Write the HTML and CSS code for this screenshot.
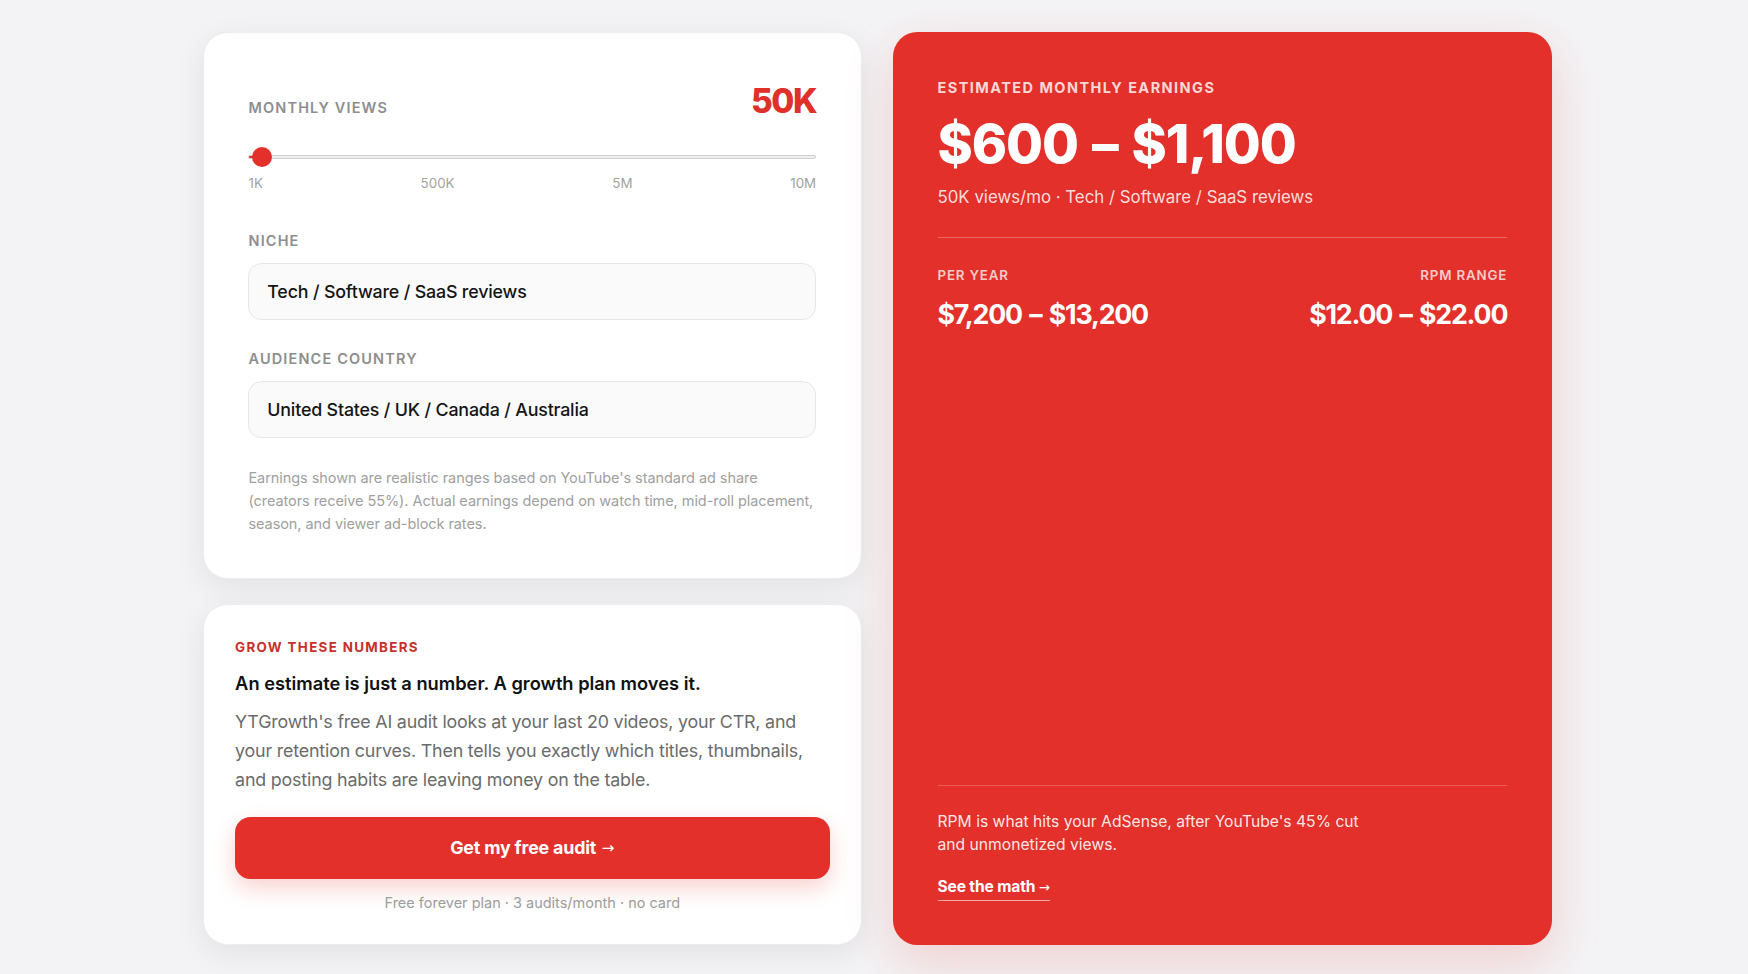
FILE: index.html
```html
<!DOCTYPE html>
<html lang="en">
<head>
<meta charset="utf-8">
<title>YouTube Earnings Estimator</title>
<link rel="stylesheet" href="styles.css">
</head>
<body>
<main class="layout">
  <div class="left-col">
    <section class="card calc-card">
      <div class="views-head">
        <span class="label">Monthly views</span>
        <span class="views-value">50K</span>
      </div>
      <div class="slider">
        <div class="slider-track">
          <div class="slider-fill" style="width: 2%"></div>
          <div class="slider-thumb" style="left: 2%"></div>
        </div>
      </div>
      <div class="ticks">
        <span>1K</span><span>500K</span><span>5M</span><span>10M</span>
      </div>

      <div class="field">
        <div class="label">Niche</div>
        <div class="select">Tech / Software / SaaS reviews</div>
      </div>
      <div class="field">
        <div class="label">Audience country</div>
        <div class="select">United States / UK / Canada / Australia</div>
      </div>

      <p class="note">Earnings shown are realistic ranges based on YouTube's standard ad share (creators receive 55%). Actual earnings depend on watch time, mid-roll placement, season, and viewer ad-block rates.</p>
    </section>

    <section class="card cta-card">
      <div class="eyebrow">Grow these numbers</div>
      <h2 class="cta-title">An estimate is just a number. A growth plan moves it.</h2>
      <p class="cta-text">YTGrowth's free AI audit looks at your last 20 videos, your CTR, and your retention curves. Then tells you exactly which titles, thumbnails, and posting habits are leaving money on the table.</p>
      <a class="cta-btn" href="#">Get my free audit <span class="arrow">→</span></a>
      <div class="cta-sub">Free forever plan · 3 audits/month · no card</div>
    </section>
  </div>

  <section class="result-card">
    <div class="result-top">
      <div class="result-label">Estimated monthly earnings</div>
      <div class="result-amount">$600 – $1,100</div>
      <div class="result-meta">50K views/mo · Tech / Software / SaaS reviews</div>
      <div class="result-stats">
        <div class="stat">
          <div class="stat-label">Per year</div>
          <div class="stat-value">$7,200 – $13,200</div>
        </div>
        <div class="stat stat-right">
          <div class="stat-label">RPM range</div>
          <div class="stat-value">$12.00 – $22.00</div>
        </div>
      </div>
    </div>
    <div class="result-bottom">
      <p class="result-note">RPM is what hits your AdSense, after YouTube's 45% cut and unmonetized views.</p>
      <a class="result-link" href="#">See the math <span class="arrow">→</span></a>
    </div>
  </section>
</main>
</body>
</html>
```

FILE: styles.css
```css
html {
  zoom: 1.1148;
}

* {
  box-sizing: border-box;
}

body {
  margin: 0;
  padding: 29px 0 26px 6px;
  background: #f3f3f5;
  font-family: Inter, "Noto Sans", "Liberation Sans", sans-serif;
  color: #111;
}

.layout {
  width: 1210px;
  margin: 0 auto;
  display: grid;
  grid-template-columns: 1fr 1fr;
  gap: 28px;
}

.left-col {
  display: flex;
  flex-direction: column;
  gap: 23px;
}

.card {
  background: #fff;
  border: 1px solid #ececee;
  border-radius: 22px;
  box-shadow: 0 8px 28px rgba(0, 0, 0, 0.07);
}

.calc-card {
  padding: 43px 40px 38px;
}

.views-head {
  display: flex;
  justify-content: space-between;
  align-items: baseline;
  height: 36px;
}

.label {
  font-size: 13px;
  line-height: 16px;
  font-weight: 600;
  letter-spacing: 0.08em;
  text-transform: uppercase;
  color: #8e8e8e;
}

.views-value {
  font-size: 30px;
  line-height: 36px;
  font-weight: 800;
  letter-spacing: -0.045em;
  color: #e0302a;
}

.slider {
  margin-top: 22px;
  height: 20px;
  display: flex;
  align-items: center;
}

.slider-track {
  position: relative;
  width: 100%;
  height: 4px;
  border-radius: 3px;
  background: #efefef;
  border: 1px solid #d0d0d0;
}

.slider-fill {
  height: 100%;
  background: #e0302a;
  border-radius: 3px;
}

.slider-thumb {
  position: absolute;
  top: 50%;
  width: 18px;
  height: 18px;
  margin-left: -8px;
  transform: translateY(-50%);
  border-radius: 50%;
  background: #e3302a;
}

.ticks {
  margin-top: 6px;
  display: flex;
  justify-content: space-between;
  font-size: 12px;
  line-height: 15px;
  color: #a3a3a3;
}

.field {
  margin-top: 27px;
}

.ticks + .field {
  margin-top: 36px;
}

.select {
  margin-top: 12px;
  height: 51px;
  display: flex;
  align-items: center;
  padding: 0 16px;
  background: #fafafa;
  border: 1px solid #e6e6e8;
  border-radius: 12px;
  font-size: 16px;
  font-weight: 500;
  letter-spacing: -0.01em;
  color: #151515;
}

.note {
  margin: 26px 0 0;
  font-size: 13px;
  line-height: 20.5px;
  letter-spacing: -0.004em;
  color: #a0a0a0;
}

.cta-card {
  padding: 30px 28px 27px;
}

.eyebrow {
  font-size: 12px;
  line-height: 15px;
  font-weight: 700;
  letter-spacing: 0.1em;
  text-transform: uppercase;
  color: #c8302b;
}

.cta-title {
  margin: 15px 0 0;
  font-size: 16.4px;
  line-height: 21px;
  font-weight: 600;
  color: #111;
}

.cta-text {
  margin: 11px 0 0;
  font-size: 16px;
  line-height: 26px;
  letter-spacing: -0.01em;
  color: #6b6b6b;
}

.cta-btn {
  margin-top: 20px;
  height: 55px;
  display: flex;
  align-items: center;
  justify-content: center;
  gap: 5px;
  background: #e3302a;
  border-radius: 14px;
  color: #fff;
  font-size: 16px;
  font-weight: 700;
  letter-spacing: -0.01em;
  text-decoration: none;
  box-shadow: 0 8px 20px rgba(227, 48, 42, 0.22);
}

.arrow {
  font-family: "DejaVu Sans", sans-serif;
  font-weight: 400;
  font-size: 0.85em;
  letter-spacing: 0;
}

.cta-sub {
  margin-top: 12px;
  text-align: center;
  font-size: 13px;
  line-height: 20px;
  color: #9d9d9d;
}

.result-card {
  background: #e3302a;
  border-radius: 22px;
  padding: 42px 40px 40px;
  display: flex;
  flex-direction: column;
  color: #fff;
  box-shadow: 0 16px 44px rgba(227, 48, 42, 0.18);
}

.result-label {
  font-size: 13px;
  line-height: 16px;
  font-weight: 700;
  letter-spacing: 0.1em;
  text-transform: uppercase;
  color: rgba(255, 255, 255, 0.82);
}

.result-amount {
  margin-top: 15px;
  font-size: 48px;
  line-height: 53px;
  font-weight: 800;
  letter-spacing: -0.02em;
  word-spacing: 3px;
  color: #fff;
}

.result-meta {
  margin-top: 12px;
  font-size: 15.1px;
  line-height: 20px;
  color: rgba(255, 255, 255, 0.85);
}

.result-stats {
  margin-top: 26px;
  padding-top: 26px;
  border-top: 1px solid rgba(255, 255, 255, 0.28);
  display: flex;
  justify-content: space-between;
}

.stat-right {
  text-align: right;
}

.stat-label {
  font-size: 12px;
  line-height: 16px;
  font-weight: 600;
  letter-spacing: 0.06em;
  text-transform: uppercase;
  color: rgba(255, 255, 255, 0.75);
}

.stat-value {
  margin-top: 11px;
  font-size: 24px;
  line-height: 29px;
  font-weight: 700;
  letter-spacing: -0.045em;
  word-spacing: 2px;
  color: #fff;
}

.result-bottom {
  margin-top: auto;
  padding-top: 21px;
  border-top: 1px solid rgba(255, 255, 255, 0.22);
}

.result-note {
  margin: 0;
  max-width: 390px;
  font-size: 14.05px;
  line-height: 21px;
  color: rgba(255, 255, 255, 0.9);
}

.result-link {
  display: inline-block;
  margin-top: 18px;
  font-size: 14px;
  line-height: 20px;
  font-weight: 700;
  letter-spacing: -0.01em;
  color: #fff;
  text-decoration: none;
  border-bottom: 1px solid rgba(255, 255, 255, 0.6);
}
```
